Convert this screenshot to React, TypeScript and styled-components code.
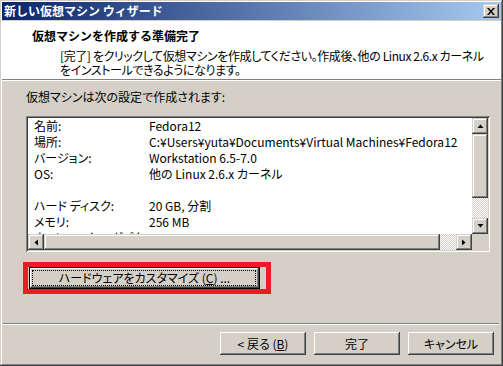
import styled, { createGlobalStyle } from 'styled-components'

const GlobalStyle = createGlobalStyle`
  html, body {
    margin: 0;
    padding: 0;
    background: #d4d0c8;
  }
  body {
    font-family: "Noto Sans CJK JP", "Noto Sans", sans-serif;
    font-size: 12px;
    color: #000;
  }
  * {
    box-sizing: border-box;
  }
`

const raised = `
  background: #d4d0c8;
  box-shadow: inset -1px -1px #404040, inset 1px 1px #d4d0c8, inset -2px -2px #808080, inset 2px 2px #fff;
`

const Window = styled.div`
  width: 503px;
  height: 366px;
  display: flex;
  flex-direction: column;
  padding: 2px;
  background: #d4d0c8;
  box-shadow: inset -1px -1px #404040, inset 1px 1px #d4d0c8, inset -2px -2px #808080, inset 2px 2px #fff;
`

const TitleBar = styled.div`
  flex: none;
  height: 18px;
  margin-bottom: 1px;
  padding: 0 2px 0 2px;
  display: flex;
  align-items: center;
  justify-content: space-between;
  background: linear-gradient(to right, #0a246a, #a6caf0);
  color: #fff;
  font-weight: bold;
  font-size: 12px;
  line-height: 18px;
  white-space: nowrap;
`

const CloseButton = styled.div`
  width: 16px;
  height: 14px;
  display: flex;
  align-items: center;
  justify-content: center;
  ${raised}
`

const Header = styled.div`
  flex: none;
  height: 58px;
  padding: 8px 0 0 30px;
  background: #fff;
`

const HeaderTitle = styled.div`
  font-weight: bold;
  line-height: 14px;
  white-space: nowrap;
`

const HeaderText = styled.div`
  margin: 6px 0 0 28px;
  white-space: nowrap;
  letter-spacing: -0.4px;
  font-feature-settings: "palt";
`

const HeaderLine = styled.div`
  height: 14px;
  line-height: 14px;
`

const Etched = styled.div<{ $inset?: boolean }>`
  flex: none;
  height: 2px;
  margin: ${p => (p.$inset ? '0 2px 0 1px' : '0')};
  border-top: 1px solid #808080;
  border-bottom: 1px solid #fff;
`

const Body = styled.div`
  flex: 1;
  display: flex;
  flex-direction: column;
  align-items: flex-start;
  padding: 8px 0 0 21px;
`

const Intro = styled.div`
  margin-left: 3px;
  line-height: 16px;
  white-space: nowrap;
  font-feature-settings: "palt";
`

const ListBox = styled.div`
  margin: 11px 0 0 3px;
  width: 464px;
  height: 136px;
  padding: 2px;
  display: grid;
  grid-template-columns: 1fr 16px;
  grid-template-rows: 1fr 16px;
  background: #fff;
  box-shadow: inset 1px 1px #808080, inset -1px -1px #fff, inset 2px 2px #404040, inset -2px -2px #d4d0c8;
`

const ListContent = styled.div`
  overflow: hidden;
  padding-left: 6px;
  display: grid;
  grid-template-columns: 115px 1fr;
  grid-auto-rows: 16px;
  font-feature-settings: "palt";
`

const Cell = styled.div`
  line-height: 16px;
  white-space: nowrap;
`

const VScroll = styled.div`
  display: flex;
  flex-direction: column;
`

const HScroll = styled.div`
  display: flex;
`

const ScrollButton = styled.div`
  flex: none;
  width: 16px;
  height: 16px;
  display: flex;
  align-items: center;
  justify-content: center;
  ${raised}
`

const Thumb = styled.div<{ $size?: number }>`
  ${raised}
  flex: ${p => (p.$size ? `none` : '1')};
  ${p => (p.$size ? `height: ${p.$size}px;` : '')}
`

const Track = styled.div<{ $size?: number }>`
  flex: ${p => (p.$size ? 'none' : '1')};
  ${p => (p.$size ? `width: ${p.$size}px;` : '')}
  background: repeating-conic-gradient(#d4d0c8 0 25%, #fff 0 50%) 0 0 / 2px 2px;
`

const Corner = styled.div`
  background: #d4d0c8;
`

const Highlight = styled.div`
  margin-top: 10px;
  width: 248px;
  height: 32px;
  padding: 0 5px 0 1px;
  border: 5px solid #ed1c24;
`

const PushButton = styled.div<{ $default?: boolean; $width: number }>`
  width: ${p => p.$width}px;
  height: ${p => (p.$default ? 22 : 23)}px;
  display: flex;
  align-items: center;
  justify-content: center;
  position: relative;
  line-height: 14px;
  white-space: nowrap;
  font-feature-settings: "palt";
  background: #d4d0c8;
  box-shadow: ${p =>
    p.$default
      ? 'inset 0 0 0 1px #000, inset -2px -2px #404040, inset 2px 2px #fff, inset -3px -3px #808080'
      : 'inset -1px -1px #404040, inset 1px 1px #fff, inset -2px -2px #808080, inset 2px 2px #d4d0c8'};

  u {
    text-decoration: underline;
  }
`

const FocusRing = styled.span`
  position: absolute;
  inset: 3px 4px 3px 3px;
  border: 1px dotted #000;
  pointer-events: none;
`

const Footer = styled.div`
  flex: none;
`

const ButtonRow = styled.div`
  display: flex;
  justify-content: flex-end;
  gap: 8px;
  padding: 7px 7px 9px 0;
`

const Arrow = ({ dir }: { dir: 'up' | 'down' | 'left' | 'right' }) => {
  const pts = {
    up: '0.5,4 3.5,0.5 6.5,4',
    down: '0.5,0 3.5,3.5 6.5,0',
    left: '4,0.5 0.5,3.5 4,6.5',
    right: '0,0.5 3.5,3.5 0,6.5',
  }[dir]
  const vertical = dir === 'up' || dir === 'down'
  return (
    <svg width={vertical ? 7 : 4} height={vertical ? 4 : 7} viewBox={vertical ? '0 0 7 4' : '0 0 4 7'}>
      <polygon points={pts} fill="#000" />
    </svg>
  )
}

const rows: [string, string][] = [
  ['名前:', 'Fedora12'],
  ['場所:', 'C:¥Users¥yuta¥Documents¥Virtual Machines¥Fedora12'],
  ['バージョン:', 'Workstation 6.5-7.0'],
  ['OS:', '他の Linux 2.6.x カーネル'],
  ['', ''],
  ['ハード ディスク:', '20 GB, 分割'],
  ['メモリ:', '256 MB'],
  ['ネットワーク アダプタ:', 'NAT'],
]

const App = () => {
  return (
    <>
      <GlobalStyle />
      <Window>
        <TitleBar>
          <span>新しい仮想マシン ウィザード</span>
          <CloseButton>
            <svg width="8" height="7" viewBox="0 0 8 7">
              <path d="M0 0h2l2 2.5L6 0h2L5 3.5 8 7H6L4 4.5 2 7H0l3-3.5z" fill="#000" />
            </svg>
          </CloseButton>
        </TitleBar>
        <Header>
          <HeaderTitle>仮想マシンを作成する準備完了</HeaderTitle>
          <HeaderText>
            <HeaderLine>[完了] をクリックして仮想マシンを作成してください。作成後、他の Linux 2.6.x カーネル</HeaderLine>
            <HeaderLine>をインストールできるようになります。</HeaderLine>
          </HeaderText>
        </Header>
        <Etched />
        <Body>
          <Intro>仮想マシンは次の設定で作成されます:</Intro>
          <ListBox>
            <ListContent>
              {rows.flatMap(([label, value], i) => [
                <Cell key={`l${i}`}>{label}</Cell>,
                <Cell key={`v${i}`}>{value}</Cell>,
              ])}
            </ListContent>
            <VScroll>
              <ScrollButton><Arrow dir="up" /></ScrollButton>
              <Thumb $size={64} />
              <Track />
              <ScrollButton><Arrow dir="down" /></ScrollButton>
            </VScroll>
            <HScroll>
              <ScrollButton><Arrow dir="left" /></ScrollButton>
              <Thumb />
              <Track $size={16} />
              <ScrollButton><Arrow dir="right" /></ScrollButton>
            </HScroll>
            <Corner />
          </ListBox>
          <Highlight>
            <PushButton $default $width={231}>
              ハードウェアをカスタマイズ (<u>C</u>) ...
              <FocusRing />
            </PushButton>
          </Highlight>
        </Body>
        <Footer>
          <Etched $inset />
          <ButtonRow>
            <PushButton $width={86}>
              &lt; 戻る (<u>B</u>)
            </PushButton>
            <PushButton $width={86}>完了</PushButton>
            <PushButton $width={86}>キャンセル</PushButton>
          </ButtonRow>
        </Footer>
      </Window>
    </>
  )
}

export default App
